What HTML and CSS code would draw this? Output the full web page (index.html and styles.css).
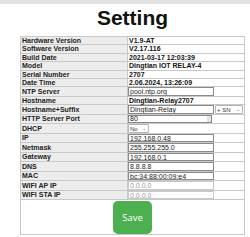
FILE: index.html
```html
<!DOCTYPE html>
<html lang="en">
<head>
  <meta charset="UTF-8">
  <title>Setting</title>
  <link rel="stylesheet" href="styles.css">
</head>
<body>
  <div class="topbar"></div>
  <div class="container">
    <h1>Setting</h1>
    <table class="settings">
      <tr><td class="lbl">Hardware Version</td><td class="val">V1.9-AT</td></tr>
      <tr><td class="lbl">Software Version</td><td class="val">V2.17.116</td></tr>
      <tr><td class="lbl">Build Date</td><td class="val">2021-03-17 12:03:39</td></tr>
      <tr><td class="lbl">Model</td><td class="val">Dingtian IOT RELAY-4</td></tr>
      <tr><td class="lbl">Serial Number</td><td class="val">2707</td></tr>
      <tr><td class="lbl">Date Time</td><td class="val">2.06.2024, 13:26:09</td></tr>
      <tr><td class="lbl">NTP Server</td><td class="val"><input class="txt" type="text" value="pool.ntp.org"></td></tr>
      <tr><td class="lbl">Hostname</td><td class="val">Dingtian-Relay2707</td></tr>
      <tr><td class="lbl">Hostname+Suffix</td><td class="val"><div class="pair"><input class="txt" type="text" value="Dingtian-Relay"><div class="sel sfx"><span>+ SN</span><span class="caret">&#8964;</span></div></div></td></tr>
      <tr><td class="lbl">HTTP Server Port</td><td class="val"><div class="num"><span>80</span><span class="spin"></span></div></td></tr>
      <tr><td class="lbl">DHCP</td><td class="val"><div class="sel dhcp"><span>No</span><span class="caret">&#8964;</span></div></td></tr>
      <tr><td class="lbl">IP</td><td class="val"><input class="txt" type="text" value="192.168.0.48"></td></tr>
      <tr><td class="lbl">Netmask</td><td class="val"><input class="txt" type="text" value="255.255.255.0"></td></tr>
      <tr><td class="lbl">Gateway</td><td class="val"><input class="txt" type="text" value="192.168.0.1"></td></tr>
      <tr><td class="lbl">DNS</td><td class="val"><input class="txt" type="text" value="8.8.8.8"></td></tr>
      <tr><td class="lbl">MAC</td><td class="val"><input class="txt" type="text" value="bc:34:88:00:09:e4"></td></tr>
      <tr><td class="lbl">WIFI AP IP</td><td class="val"><input class="txt off" type="text" value="0.0.0.0" disabled></td></tr>
      <tr><td class="lbl">WIFI STA IP</td><td class="val"><input class="txt off" type="text" value="0.0.0.0" disabled></td></tr>
      <tr><td class="save-cell" colspan="2"><button class="save">Save</button></td></tr>
    </table>
  </div>
</body>
</html>
```

FILE: styles.css
```css
body { margin: 0; background: #fff; font-family: "Liberation Sans", Arial, sans-serif; color: #111; }
.topbar { height: 4px; background: #e2e2e2; }
.container { margin-left: 20px; width: 225px; }
h1 { margin: 0; padding-top: 2px; height: 30px; text-align: center; font-size: 21px; line-height: 24px; font-weight: bold; }
.settings { width: 225px; border-collapse: collapse; font-size: 7px; font-weight: bold; }
.settings td { border: 1px solid #c8c8c8; padding: 0 1px; height: 7.4px; line-height: 7.4px; white-space: nowrap; }
.lbl { width: 108px; background: #ececec; color: #222; }
.val { background: #fff; color: #111; }
.txt { display: block; box-sizing: border-box; width: 86px; height: 8.5px; margin: 0 0 0 -1px; padding: 0 1px; border: 1px solid #8a8a8a; font: 7px "Liberation Sans", Arial, sans-serif; color: #222; background: #fff; }
.txt.off { color: #999; border-color: #c8c8c8; }
.pair { display: flex; gap: 1px; margin-left: -1px; }
.pair .txt { margin: 0; }
.sel { display: flex; justify-content: space-between; align-items: center; box-sizing: border-box; height: 8.5px; padding: 0 2px 0 1px; border: 1px solid #b4b4b4; border-radius: 1px; font-size: 6px; font-weight: normal; line-height: 6px; color: #333; background: #fff; }
.caret { font-size: 5px; line-height: 4px; color: #555; margin-top: -2px; }
.sfx { width: 28px; }
.dhcp { width: 21px; margin-left: -1px; }
.num { display: flex; justify-content: space-between; box-sizing: border-box; width: 84px; height: 8.5px; margin-left: -1px; padding-left: 1px; border: 1px solid #8a8a8a; font-weight: normal; line-height: 6.5px; }
.spin { width: 4px; height: 6.5px; background: #e4e4e4; }
.save-cell { height: 33px !important; padding: 0 !important; text-align: center; }
.save { width: 39px; height: 33px; margin-top: 1px; border: none; border-radius: 5px; background: #4caf50; color: #fff; font: 9.5px "Open Sans", "Liberation Sans", sans-serif; cursor: pointer; }
```
